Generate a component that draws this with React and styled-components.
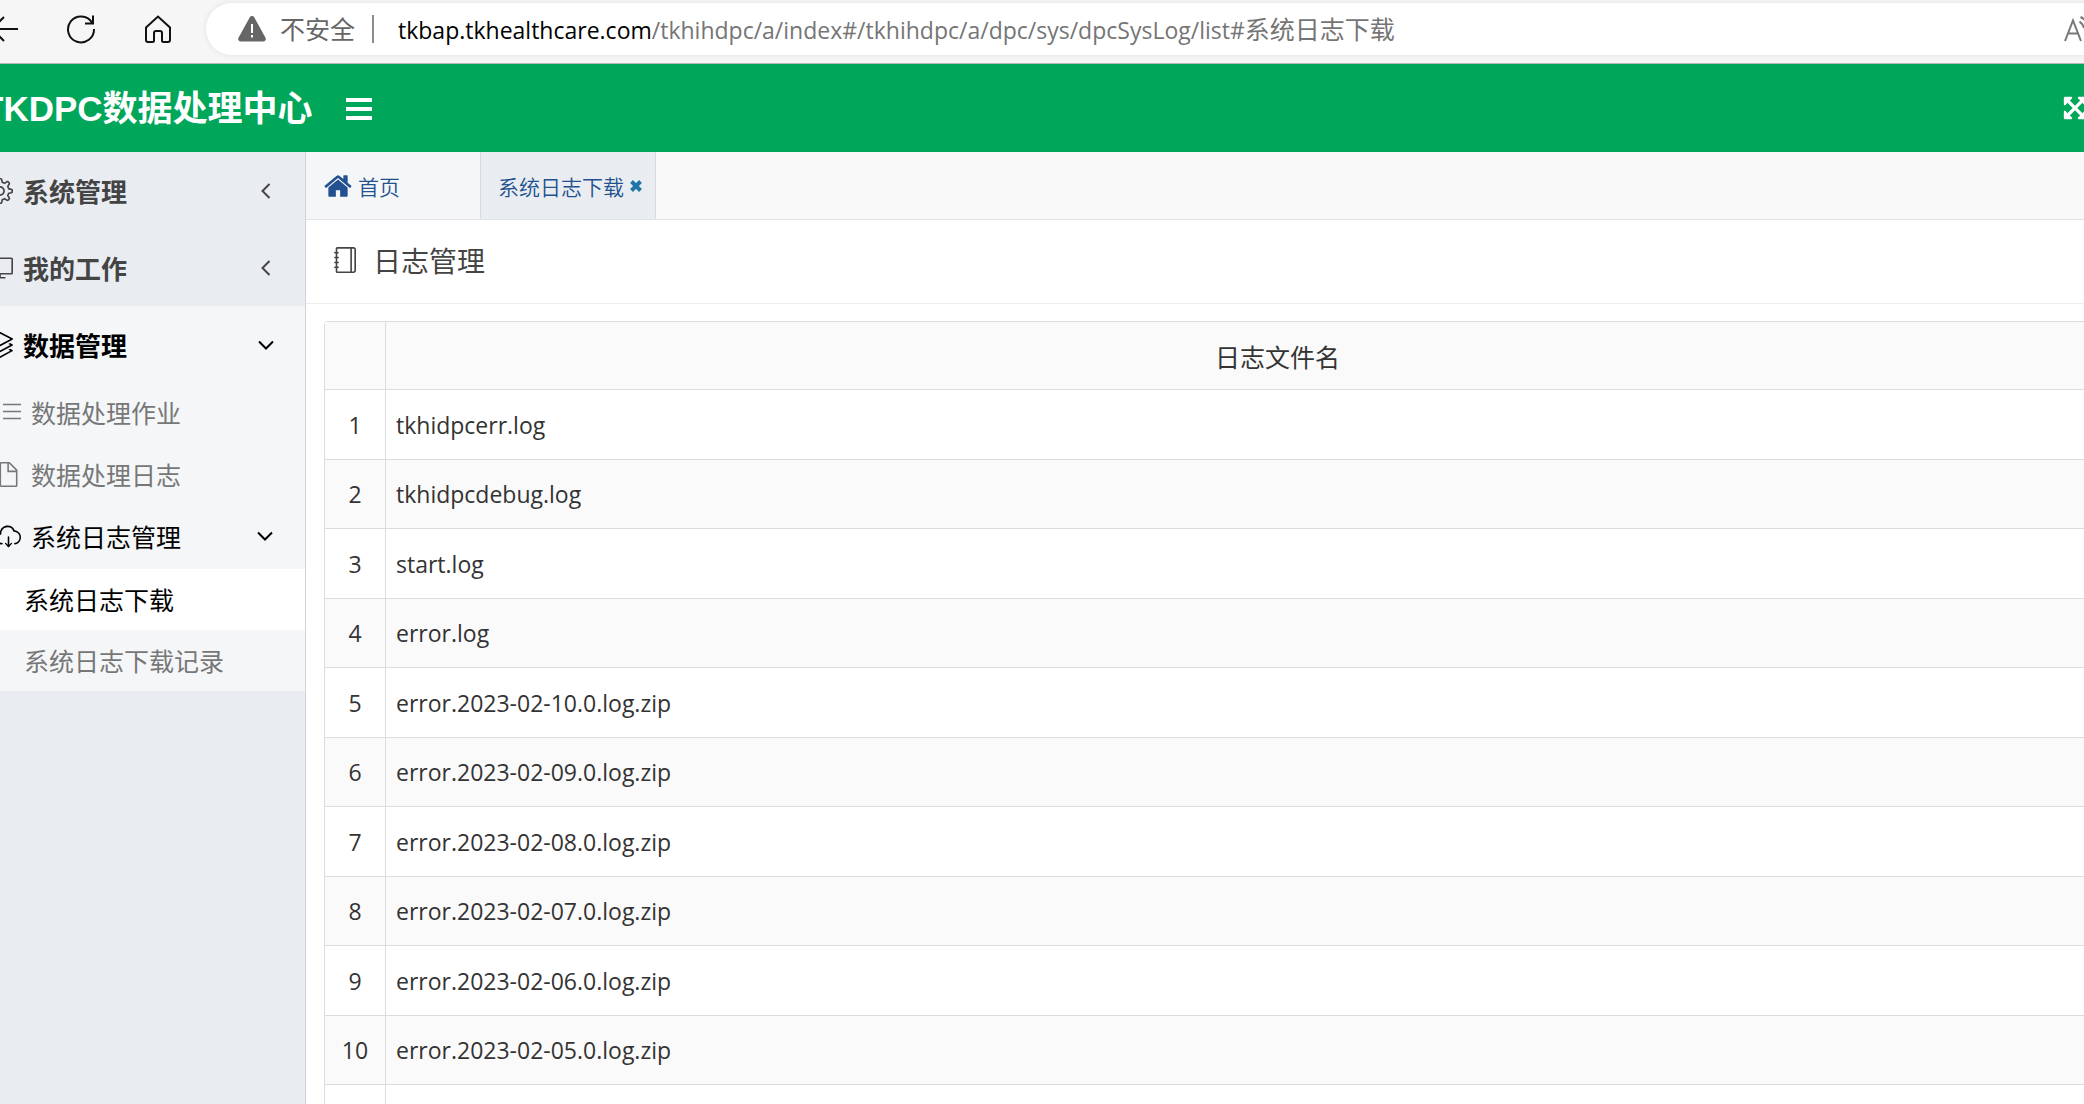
import React from "react";
import { createGlobalStyle, styled } from "styled-components";
import {
  SlSettings,
  SlScreenDesktop,
  SlLayers,
  SlDoc,
  SlCloudDownload,
  SlNotebook,
} from "react-icons/sl";

const LOGS = [
  "tkhidpcerr.log",
  "tkhidpcdebug.log",
  "start.log",
  "error.log",
  "error.2023-02-10.0.log.zip",
  "error.2023-02-09.0.log.zip",
  "error.2023-02-08.0.log.zip",
  "error.2023-02-07.0.log.zip",
  "error.2023-02-06.0.log.zip",
  "error.2023-02-05.0.log.zip",
  "",
];

const Chevron = ({ open }) => (
  <ChevronSvg viewBox="0 0 16 16" aria-hidden="true">
    <path d={open ? "M1 4.5 8 11.5 15 4.5" : "M11.5 1 4.5 8 11.5 15"} />
  </ChevronSvg>
);

const BrowserBar = () => (
  <Browser>
    <NavButtons>
      <LineButton type="button" aria-label="后退">
        <svg width="28" height="28" viewBox="0 0 28 28">
          <path d="M28 14H2M14 2 2 14 14 26" />
        </svg>
      </LineButton>
      <LineButton type="button" aria-label="刷新">
        <svg width="30" height="30" viewBox="0 0 30 30">
          <path d="M26 8.5A13 13 0 1 0 28 15M27 1.5V9.5H19" />
        </svg>
      </LineButton>
      <LineButton type="button" aria-label="主页">
        <svg width="28" height="28" viewBox="0 0 28 28">
          <path d="M2 12.5 14 1.5 26 12.5V25a2 2 0 0 1-2 2H19.500a1.500 1.500 0 0 1-1.500-1.500V18a2 2 0 0 0-2-2h-4a2 2 0 0 0-2 2v7.500A1.500 1.500 0 0 1 8.500 27H4a2 2 0 0 1-2-2Z" />
        </svg>
      </LineButton>
    </NavButtons>
    <Address>
      <svg width="30" height="28" viewBox="0 0 30 28">
        <path
          fill="#666"
          d="M12.800 2.200a2.500 2.500 0 0 1 4.400 0l11.300 20.600A2.500 2.500 0 0 1 26.300 26.500H3.700a2.500 2.500 0 0 1-2.200-3.700Z"
        />
        <path stroke="#fff" strokeWidth="2" d="M15 9v9M15 20v2.500" />
      </svg>
      <Unsafe>不安全</Unsafe>
      <Url>
        <b>tkbap.tkhealthcare.com</b>
        /tkhihdpc/a/index#/tkhihdpc/a/dpc/sys/dpcSysLog/list#
        <Hash>系统日志下载</Hash>
      </Url>
      <ReadAloud type="button" aria-label="朗读">
        <svg width="30" height="28" viewBox="0 0 30 28">
          <path d="M1 26 9 5.500 17 26M4 18.500H14M15.500 6.500Q19 9 20 13M16.500 2Q23 5 25 12" />
        </svg>
      </ReadAloud>
    </Address>
  </Browser>
);

const App = () => {
  return (
    <>
      <GlobalStyle />
      <Shell>
        <BrowserBar />
        <Header>
          <Brand>TKDPC数据处理中心</Brand>
          <HeaderButton type="button" aria-label="菜单">
            <svg width="28" height="24" viewBox="0 0 28 24">
              <path fill="#fff" d="M1 2h26v4H1zM1 11h26v4H1zM1 20h26v4H1z" />
            </svg>
          </HeaderButton>
          <FullScreen type="button" aria-label="全屏">
            <svg width="26" height="26" viewBox="0 0 1792 1792">
              <path
                fill="#fff"
                d="M1411 541l-355 355 355 355 144-144q29-31 70-14 39 17 39 59v448q0 26-19 45t-45 19h-448q-42 0-59-40-17-39 14-69l144-144-355-355-355 355 144 144q31 30 14 69-17 40-59 40h-448q-26 0-45-19t-19-45v-448q0-42 40-59 39-17 69 14l144 144 355-355-355-355-144 144q-19 19-45 19-12 0-24-5-40-17-40-59v-448q0-26 19-45t45-19h448q42 0 59 40 17 39-14 69l-144 144 355 355 355-355-144-144q-31-30-14-69 17-40 59-40h448q26 0 45 19t19 45v448q0 42-39 59-13 5-25 5-26 0-45-19z"
              />
            </svg>
          </FullScreen>
        </Header>
        <Body>
          <Sidebar>
            <MenuItem href="#sys">
              <SlSettings />
              <span>系统管理</span>
              <Chevron />
            </MenuItem>
            <MenuItem href="#work">
              <SlScreenDesktop />
              <span>我的工作</span>
              <Chevron />
            </MenuItem>
            <OpenGroup>
              <MenuItem href="#data" $active>
                <SlLayers />
                <span>数据管理</span>
                <Chevron open />
              </MenuItem>
              <SubMenu>
                <SubItem href="#job">
                  <svg width="25" height="24" viewBox="0 0 25 24">
                    <path
                      stroke="currentColor"
                      strokeWidth="1.5"
                      d="M7 4.500H25M7 11.500H25M7 18.500H25"
                    />
                  </svg>
                  <span>数据处理作业</span>
                </SubItem>
                <SubItem href="#joblog">
                  <SlDoc />
                  <span>数据处理日志</span>
                </SubItem>
                <SubItem href="#syslog" $active>
                  <SlCloudDownload />
                  <span>系统日志管理</span>
                  <Chevron open />
                </SubItem>
                <LeafItem href="#download" $active>
                  系统日志下载
                </LeafItem>
                <LeafItem href="#record">系统日志下载记录</LeafItem>
              </SubMenu>
            </OpenGroup>
          </Sidebar>
          <Content>
            <Tabs>
              <Tab>
                <TabLink href="#home">
                  <svg width="30" height="30" viewBox="0 0 1792 1792">
                    <path
                      fill="currentColor"
                      d="M1472 992v480q0 26-19 45t-45 19h-384v-384h-256v384h-384q-26 0-45-19t-19-45v-480q0-1 .5-3t.5-3l575-474 575 474q1 2 1 6zm223-69l-62 74q-8 9-21 11h-3q-13 0-21-7l-692-577-692 577q-12 8-24 7-13-2-21-11l-62-74q-8-10-7-23.5t11-21.5l719-599q32-26 76-26t76 26l244 204v-195q0-14 9-23t23-9h192q14 0 23 9t9 23v408l219 182q10 8 11 21.5t-7 23.5z"
                    />
                  </svg>
                  首页
                </TabLink>
              </Tab>
              <Tab $active>
                <TabLink href="#download">系统日志下载</TabLink>
                <TabClose type="button" aria-label="关闭">
                  <svg width="12" height="12" viewBox="0 0 12 12">
                    <path
                      stroke="#1f74a8"
                      strokeWidth="4"
                      d="M1.500 1.500 10.500 10.500M10.500 1.500 1.500 10.500"
                    />
                  </svg>
                </TabClose>
              </Tab>
            </Tabs>
            <Title>
              <SlNotebook />
              日志管理
            </Title>
            <Grid>
              <thead>
                <tr>
                  <NumHead aria-label="序号" />
                  <th>日志文件名</th>
                </tr>
              </thead>
              <tbody>
                {LOGS.map((name, i) => (
                  <tr key={i}>
                    <NumCell>{name ? i + 1 : ""}</NumCell>
                    <td>{name}</td>
                  </tr>
                ))}
              </tbody>
            </Grid>
          </Content>
        </Body>
      </Shell>
    </>
  );
};

export default App;

const GlobalStyle = createGlobalStyle`
  * {
    box-sizing: border-box;
  }
  html,
  body,
  #root {
    height: 100%;
  }
  body {
    margin: 0;
    overflow: hidden;
    background: #fff;
    color: #333;
    font-family: "Open Sans", "Noto Sans CJK SC", sans-serif;
    font-size: 23px;
  }
  button {
    padding: 0;
    border: 0;
    background: none;
    display: flex;
  }
  a {
    text-decoration: none;
  }
  svg {
    flex-shrink: 0;
  }
`;
const Shell = styled.div`
  height: 100%;
  margin: 0 -100px 0 -20px;
  display: flex;
  flex-direction: column;
  overflow: hidden;
`;
const Browser = styled.div`
  height: 64px;
  flex-shrink: 0;
  padding: 3px 0 8px 10px;
  display: flex;
  align-items: center;
  background: #f6f6f6;
  border-bottom: 1px solid #b8b8b8;
`;
const NavButtons = styled.div`
  padding-right: 34px;
  display: flex;
  align-items: center;
  gap: 48px;
`;
const LineButton = styled.button`
  svg {
    fill: none;
    stroke: #111;
    stroke-width: 2;
  }
`;
const Address = styled.div`
  flex: 1;
  height: 52px;
  padding-left: 31px;
  display: flex;
  align-items: center;
  border-radius: 26px 0 0 26px;
  background: #fff;
  box-shadow: 0 0 6px #e2e2e2;
`;
const Unsafe = styled.span`
  margin-left: 13px;
  padding-right: 17px;
  color: #666;
  font-size: 25px;
  line-height: 28px;
  border-right: 2px solid #8c8c8c;
`;
const Url = styled.span`
  padding-left: 24px;
  flex: 1;
  line-height: 28px;
  white-space: nowrap;
  color: #757575;

  b {
    color: #000;
    font-weight: 400;
  }
`;
const Hash = styled.span`
  font-size: 25px;
`;
const ReadAloud = styled(LineButton)`
  width: 120px;

  svg {
    stroke: #777;
  }
`;
const Header = styled.header`
  height: 88px;
  flex-shrink: 0;
  padding-left: 2px;
  display: flex;
  align-items: center;
  background: #00a65a;
`;
const Brand = styled.h1`
  width: 363px;
  margin: 0;
  padding-bottom: 6px;
  color: #fff;
  font-family: "Liberation Sans", "Noto Sans CJK SC", sans-serif;
  font-size: 35px;
  font-weight: 700;
  white-space: nowrap;
`;
const HeaderButton = styled.button`
  flex: 1;
`;
const FullScreen = styled.button`
  width: 122px;
`;
const Body = styled.div`
  flex: 1;
  min-height: 0;
  display: flex;
`;
const Sidebar = styled.nav`
  width: 326px;
  flex-shrink: 0;
  background: #e9edf2;
  border-right: 1px solid #cfd3dc;
`;
const MenuItem = styled.a`
  height: 77px;
  padding: 0 31px 0 7px;
  display: flex;
  align-items: center;
  gap: 10px;
  color: ${(props) => (props.$active ? "#000" : "#444")};
  font-size: 26px;
  font-weight: 700;

  span {
    flex: 1;
  }
`;
const OpenGroup = styled.div`
  background: #f4f6f8;
`;
const SubMenu = styled.div`
  font-size: 25px;
`;
const SubItem = styled.a`
  height: 62px;
  padding: 0 32px 4px 16px;
  display: flex;
  align-items: center;
  gap: 10px;
  color: ${(props) => (props.$active ? "#000" : "#777")};

  span {
    flex: 1;
  }
`;
const LeafItem = styled.a`
  height: 61px;
  padding: 0 0 2px 44px;
  display: flex;
  align-items: center;
  color: ${(props) => (props.$active ? "#000" : "#777")};
  background: ${(props) => (props.$active ? "#fff" : "transparent")};
`;
const ChevronSvg = styled.svg`
  width: 16px;
  height: 16px;
  fill: none;
  stroke: currentColor;
  stroke-width: 2;
`;
const Content = styled.main`
  flex: 1;
  min-width: 0;
`;
const Tabs = styled.div`
  height: 68px;
  display: flex;
  background: #f9f9f9;
  border-bottom: 1px solid #e1e3e6;
`;
const Tab = styled.div`
  width: 175px;
  padding-left: 17px;
  display: flex;
  align-items: center;
  gap: 6px;
  background: ${(props) => (props.$active ? "#e9edf2" : "#f4f6f8")};
  border-right: 1px solid #d8dade;
`;
const TabLink = styled.a`
  display: flex;
  align-items: center;
  gap: 5px;
  color: #23508e;
  font-size: 21px;
  font-weight: 350;
  white-space: nowrap;
`;
const TabClose = styled.button`
  flex-shrink: 0;
`;
const Title = styled.h2`
  height: 84px;
  margin: 0;
  padding: 0 0 4px 26px;
  display: flex;
  align-items: center;
  gap: 15px;
  color: #444;
  font-size: 28px;
  font-weight: 400;
  border-bottom: 1px solid #eee;

  svg {
    width: 26px;
    height: 26px;
  }
`;
const Grid = styled.table`
  width: calc(100% - 32px);
  margin: 17px 0 0 18px;
  table-layout: fixed;
  border-spacing: 0;
  border: solid #ddd;
  border-width: 1px 0 0 1px;
  border-radius: 4px 0 0 0;

  th,
  td {
    height: 70px;
    padding: 0 10px;
    font-weight: 400;
    text-align: left;
    border: solid #ddd;
    border-width: 0 1px 1px 0;
  }
  th {
    height: 68px;
    font-size: 25px;
    text-align: center;
    background: #fafafa;
  }
  tbody tr:nth-child(even) td {
    height: 69px;
    background: #fafafa;
  }
`;
const NumHead = styled.th`
  width: 61px;
`;
const NumCell = styled.td`
  &&& {
    padding: 0;
    text-align: center;
  }
`;
